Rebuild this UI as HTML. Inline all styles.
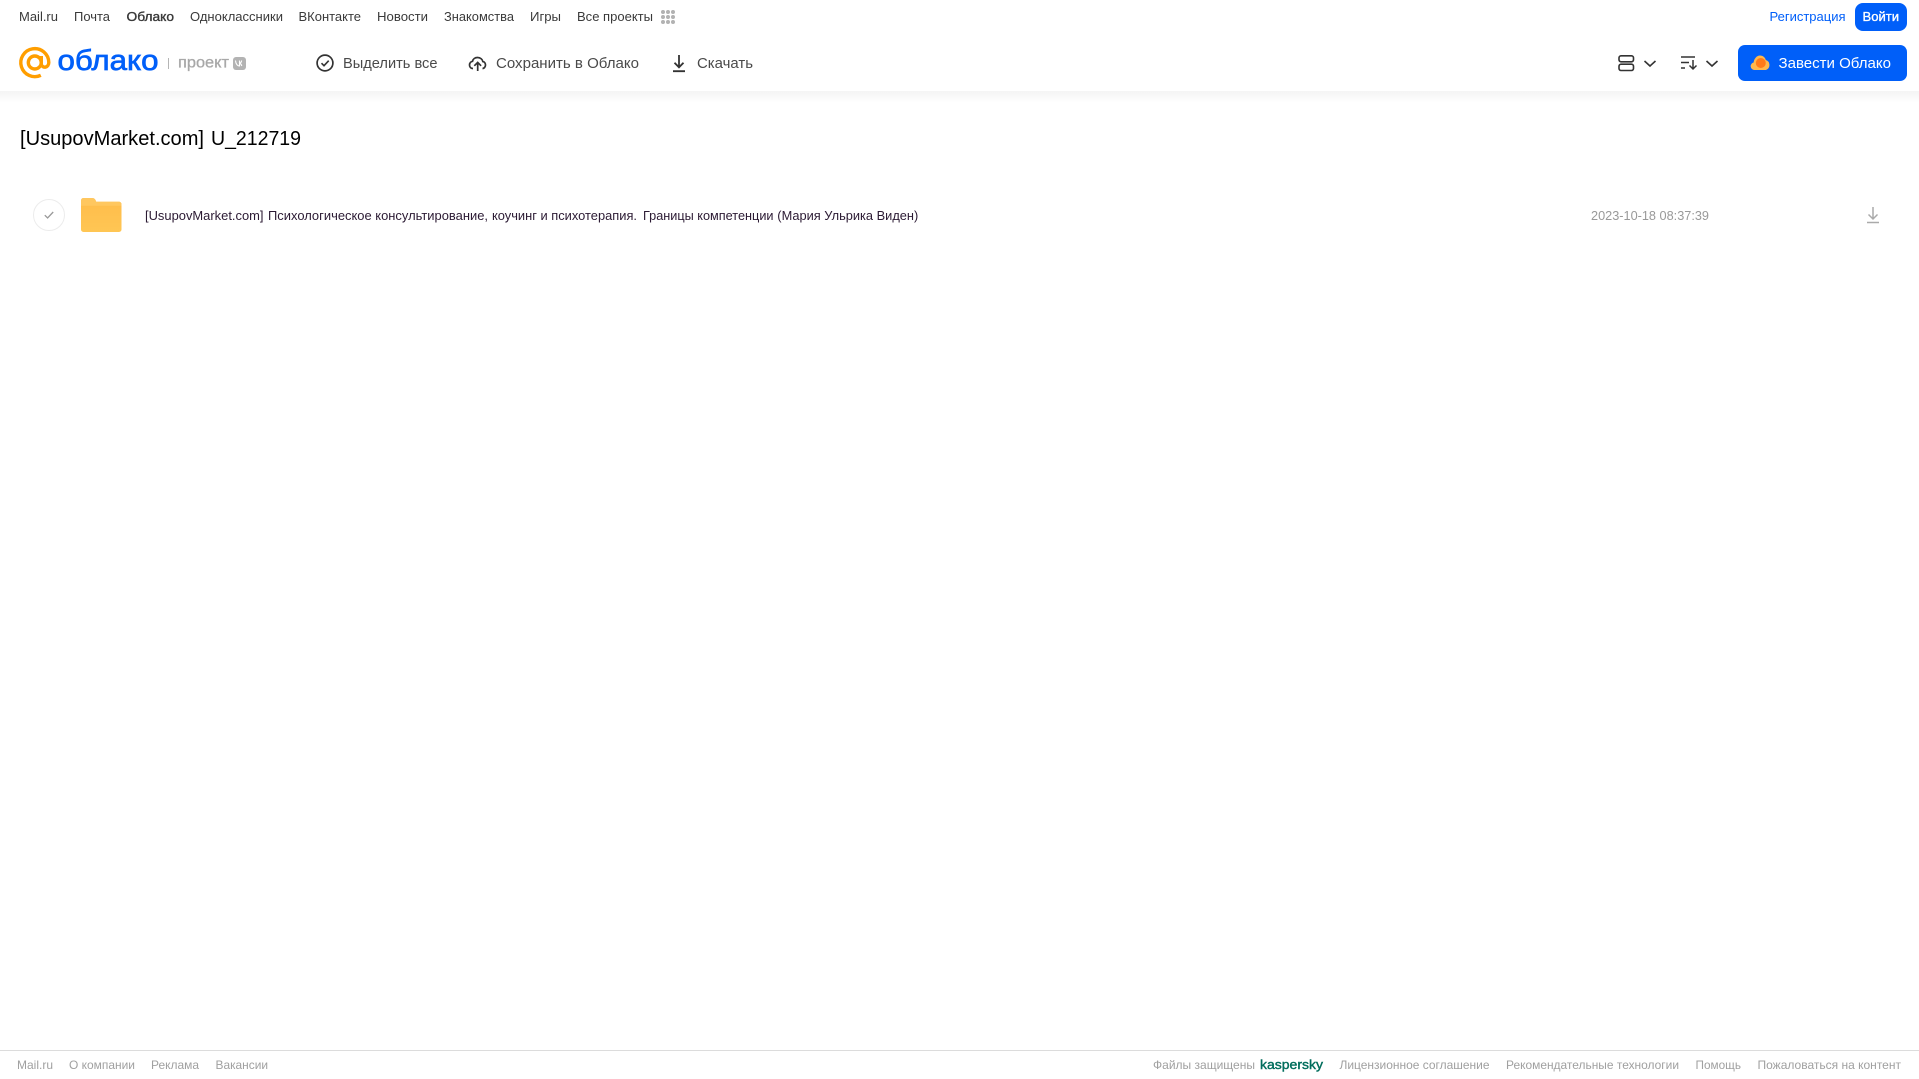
<!DOCTYPE html>
<html lang="ru">
<head>
<meta charset="utf-8">
<title>[UsupovMarket.com] U_212719</title>
<style>
html,body{margin:0;padding:0;background:#fff;width:1919px;height:1079px;overflow:hidden}
svg{position:absolute;left:0;top:0;display:block}
text{font-family:"Liberation Sans",Arial,sans-serif;white-space:pre}
.n{font-size:13px;fill:#3a3a3a}
.t{font-size:15px;fill:#4a4a4a}
.f{font-size:12px;fill:#a0a0a0}
.r{font-size:13px;fill:#2b1a33}
</style>
</head>
<body>
<svg width="1919" height="1079" viewBox="0 0 1919 1079" xmlns="http://www.w3.org/2000/svg">
<defs>
<linearGradient id="sh" x1="0" y1="0" x2="0" y2="1"><stop offset="0" stop-color="#f4f4f4"/><stop offset="1" stop-color="#fff"/></linearGradient>
<linearGradient id="fo" x1="0" y1="0" x2="0" y2="1"><stop offset="0" stop-color="#ffbc4a"/><stop offset="1" stop-color="#ffc654"/></linearGradient>
</defs>
<rect width="1919" height="1079" fill="#fff"/>
<rect x="0" y="91" width="1919" height="12" fill="url(#sh)"/>

<!-- top nav -->
<text class="n" x="19" y="21" textLength="39" lengthAdjust="spacingAndGlyphs">Mail.ru</text>
<text class="n" x="74" y="21" textLength="36" lengthAdjust="spacingAndGlyphs">Почта</text>
<text class="n" x="126.500" y="21" textLength="47.500" lengthAdjust="spacingAndGlyphs" stroke="#333" stroke-width=".35">Облако</text>
<text class="n" x="190" y="21" textLength="93" lengthAdjust="spacingAndGlyphs">Одноклассники</text>
<text class="n" x="298.500" y="21" textLength="62.500" lengthAdjust="spacingAndGlyphs">ВКонтакте</text>
<text class="n" x="377" y="21" textLength="51" lengthAdjust="spacingAndGlyphs">Новости</text>
<text class="n" x="444" y="21" textLength="70" lengthAdjust="spacingAndGlyphs">Знакомства</text>
<text class="n" x="530" y="21" textLength="31" lengthAdjust="spacingAndGlyphs">Игры</text>
<text class="n" x="577" y="21" textLength="76" lengthAdjust="spacingAndGlyphs">Все проекты</text>
<g fill="#b2b2b2">
<circle cx="663" cy="12" r="2"/><circle cx="668" cy="12" r="2"/><circle cx="673" cy="12" r="2"/>
<circle cx="663" cy="17" r="2"/><circle cx="668" cy="17" r="2"/><circle cx="673" cy="17" r="2"/>
<circle cx="663" cy="22" r="2"/><circle cx="668" cy="22" r="2"/><circle cx="673" cy="22" r="2"/>
</g>
<text class="n" x="1769.500" y="21" textLength="76" lengthAdjust="spacingAndGlyphs" style="fill:#005ff9">Регистрация</text>
<rect x="1855" y="3" width="52" height="28" rx="8" fill="#005ff9"/>
<text class="n" x="1862.500" y="21" textLength="36.500" lengthAdjust="spacingAndGlyphs" stroke="#fff" stroke-width=".35" style="fill:#fff">Войти</text>

<!-- logo -->
<g fill="none" stroke="#ff9e00" stroke-width="3.400">
<circle cx="34.800" cy="62.500" r="6.500"/>
<path d="M40.800 75.300A14 14 0 1 1 48.800 62.500C48.800 67.500 42.800 69 41.300 64.500V56"/>
</g>
<text x="57.500" y="70" font-size="29" fill="#005ff9" stroke="#005ff9" stroke-width=".7" textLength="101" lengthAdjust="spacingAndGlyphs">облако</text>
<rect x="168" y="58" width="1" height="11" fill="#b5b5b5"/>
<text x="178" y="67.500" font-size="15.500" fill="#a8a8a8" stroke="#a8a8a8" stroke-width=".3" textLength="51" lengthAdjust="spacingAndGlyphs">проект</text>
<rect x="233" y="57" width="13" height="13" rx="3" fill="#b3b3b3"/>
<path d="M235.500 60.500c.2 3.300 1.800 5.500 4 5.500V63.300c1 .1 1.800 1.100 2.300 2.700M239.500 60.500v2.800c1-.1 1.800-1.100 2.100-2.800" fill="none" stroke="#fff" stroke-width="1.100"/>

<!-- toolbar -->
<circle cx="325" cy="63" r="7.900" fill="none" stroke="#333" stroke-width="1.700"/>
<path d="M321.500 63.200l2.500 2.500 4.700-5" fill="none" stroke="#333" stroke-width="1.600"/>
<text class="t" x="343" y="68" textLength="94.500" lengthAdjust="spacingAndGlyphs">Выделить все</text>
<path d="M473 68.500C470.500 68.500 469.500 66.500 469.500 65C469.500 63 471 61.500 472.500 61.300C473 59 475 57.500 477.500 57.500C480.500 57.500 482.500 59.500 482.800 61.500C484.500 61.800 485.500 63.500 485.500 65C485.500 67 484 68.500 482.500 68.500" fill="none" stroke="#333" stroke-width="1.700"/>
<path d="M477.700 71V62.500M474.300 65.800l3.400-3.400 3.400 3.400" fill="none" stroke="#333" stroke-width="1.700"/>
<text class="t" x="496" y="68" textLength="143" lengthAdjust="spacingAndGlyphs">Сохранить в Облако</text>
<path d="M679 55v12M674.500 62.800L679 67.300l4.500-4.500M673 71.200h12" fill="none" stroke="#333" stroke-width="1.800"/>
<text class="t" x="697" y="68" textLength="56" lengthAdjust="spacingAndGlyphs">Скачать</text>

<!-- right controls -->
<g fill="none" stroke="#333" stroke-width="1.600">
<rect x="1619" y="55.800" width="14.500" height="6" rx="2"/>
<rect x="1619" y="64.200" width="14.500" height="6.300" rx="2"/>
<path d="M1644.500 61l5.500 5 5.500-5"/>
<path d="M1681 57h14M1681 62.500h8M1681 68h4" stroke-width="1.400"/>
<path d="M1693 60v9M1689.500 65.500l3.500 3.500 3.500-3.500" stroke-width="1.500"/>
<path d="M1706.500 61l5.500 5 5.500-5"/>
</g>
<rect x="1738" y="45" width="169" height="36" rx="7" fill="#005ff9"/>
<path d="M1754.500 70a3.800 3.800 0 0 1-.9-7.500C1754 59 1756.500 55.500 1760 55.500c3 0 5.200 2 5.800 4.500a5.300 5.300 0 0 1 .2 10z" fill="#ffb84d"/>
<circle cx="1760.800" cy="63" r="5" fill="#ff7a1a"/>
<text class="t" x="1778.500" y="68" textLength="112.500" lengthAdjust="spacingAndGlyphs" style="fill:#fff">Завести Облако</text>

<!-- heading -->
<text x="20" y="145" font-size="20" fill="#000" textLength="184" lengthAdjust="spacingAndGlyphs">[UsupovMarket.com]</text>
<text x="211" y="145" font-size="20" fill="#000" textLength="90" lengthAdjust="spacingAndGlyphs">U_212719</text>

<!-- row -->
<circle cx="49" cy="215" r="15.500" fill="#fff" stroke="#ececec" stroke-width="1"/>
<path d="M44.800 215.200l2.800 2.800 5.600-6" fill="none" stroke="#999" stroke-width="1.300"/>
<path d="M81 200.500a2.500 2.500 0 0 1 2.500-2.500H92c2.500 0 3.500 1.500 4.200 3.800H119a2.500 2.500 0 0 1 2.500 2.500V229.500a2.500 2.500 0 0 1-2.500 2.500H83.500a2.500 2.500 0 0 1-2.500-2.500z" fill="url(#fo)"/>
<path d="M81 205.800h40.500V204.300a2.500 2.500 0 0 0-2.500-2.500H96.200C95.500 199.500 94.500 198 92 198H83.500a2.500 2.500 0 0 0-2.500 2.500z" fill="#ffc75f"/>
<text class="r" x="145" y="220" textLength="118.500" lengthAdjust="spacingAndGlyphs">[UsupovMarket.com]</text>
<text class="r" x="268" y="220" textLength="220" lengthAdjust="spacingAndGlyphs">Психологическое консультирование,</text>
<text class="r" x="492" y="220" textLength="145" lengthAdjust="spacingAndGlyphs">коучинг и психотерапия.</text>
<text class="r" x="643" y="220" textLength="130.500" lengthAdjust="spacingAndGlyphs">Границы компетенции</text>
<text class="r" x="777.300" y="220" textLength="141" lengthAdjust="spacingAndGlyphs">(Мария Ульрика Виден)</text>
<text x="1591" y="220" font-size="13" fill="#999" textLength="118" lengthAdjust="spacingAndGlyphs">2023-10-18 08:37:39</text>
<path d="M1873 207v12M1868.500 214.500l4.500 4.500 4.500-4.500M1867 222.500h12" fill="none" stroke="#aaa" stroke-width="1.500"/>

<!-- footer -->
<rect x="0" y="1050" width="1919" height="1" fill="#dcdcdc"/>
<text class="f" x="17" y="1069" textLength="36" lengthAdjust="spacingAndGlyphs">Mail.ru</text>
<text class="f" x="69" y="1069" textLength="66" lengthAdjust="spacingAndGlyphs">О компании</text>
<text class="f" x="151" y="1069" textLength="48" lengthAdjust="spacingAndGlyphs">Реклама</text>
<text class="f" x="215.500" y="1069" textLength="52.500" lengthAdjust="spacingAndGlyphs">Вакансии</text>
<text class="f" x="1153" y="1069" textLength="102" lengthAdjust="spacingAndGlyphs">Файлы защищены</text>
<text x="1260" y="1069" font-size="13" fill="#006d5c" stroke="#006d5c" stroke-width=".4" textLength="63" lengthAdjust="spacingAndGlyphs">kaspersky</text>
<text class="f" x="1339.500" y="1069" textLength="150" lengthAdjust="spacingAndGlyphs">Лицензионное соглашение</text>
<text class="f" x="1506" y="1069" textLength="173" lengthAdjust="spacingAndGlyphs">Рекомендательные технологии</text>
<text class="f" x="1695.500" y="1069" textLength="45.500" lengthAdjust="spacingAndGlyphs">Помощь</text>
<text class="f" x="1757.500" y="1069" textLength="143.500" lengthAdjust="spacingAndGlyphs">Пожаловаться на контент</text>
</svg>
</body>
</html>
